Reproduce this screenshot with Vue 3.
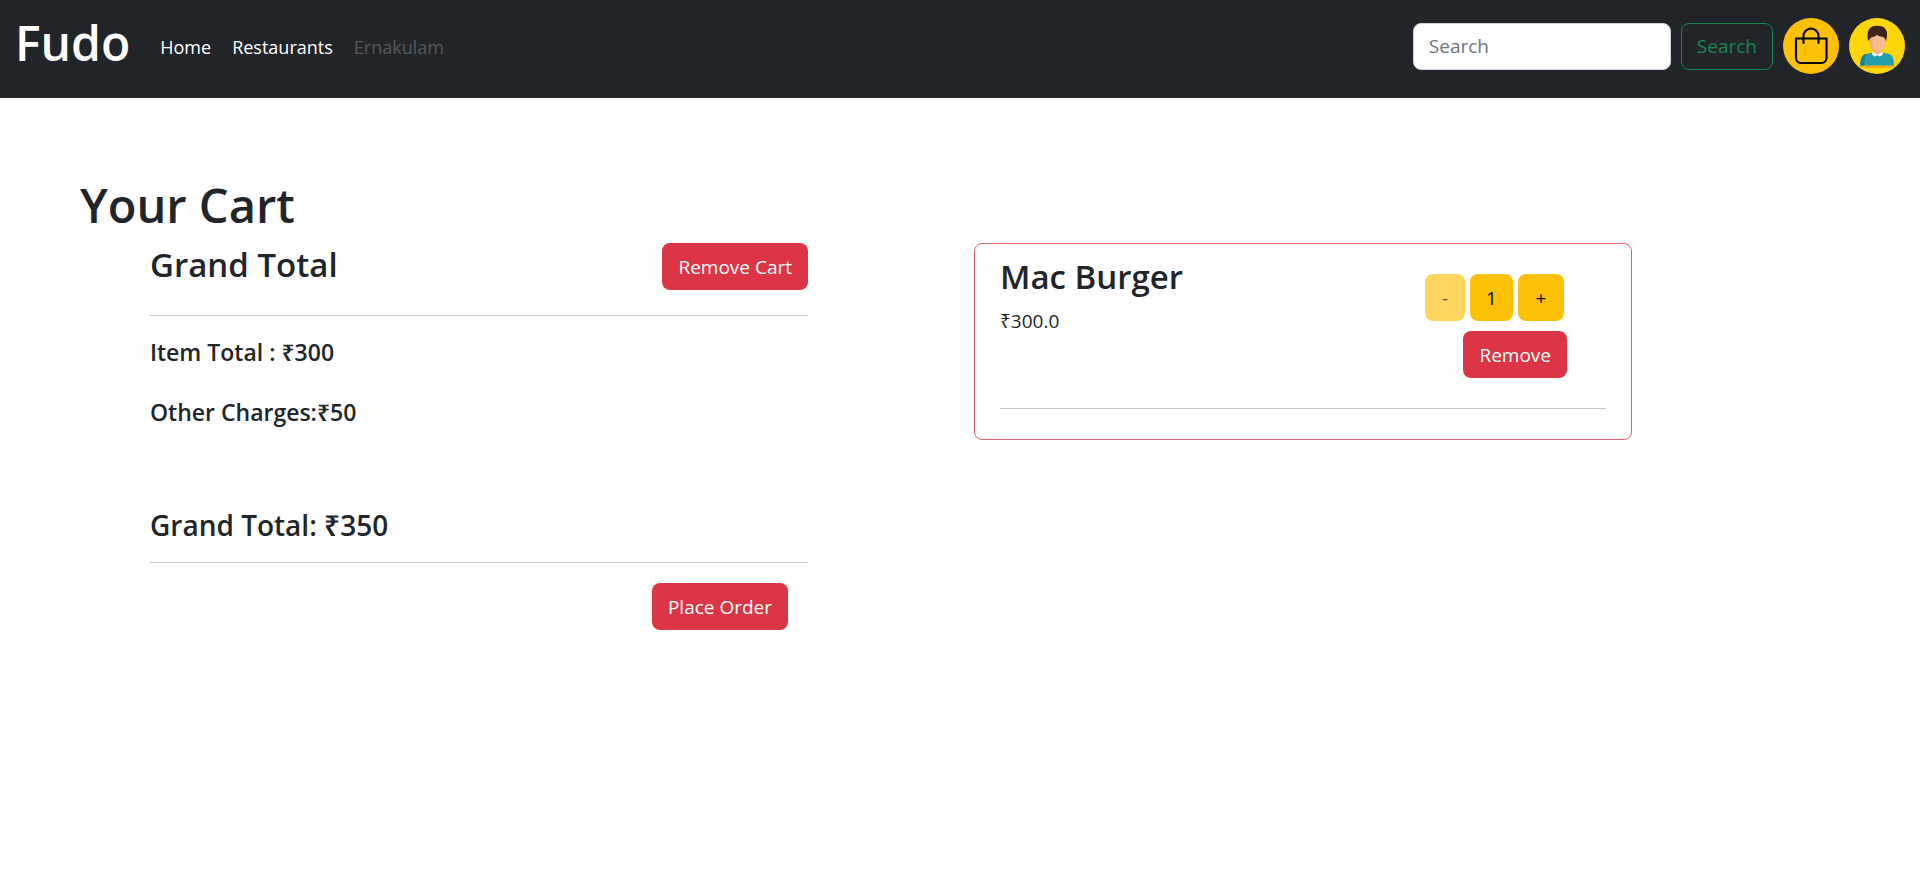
<script setup>
import { computed, ref } from 'vue'

const query = ref('')
const quantity = ref(1)
const price = 300
const otherCharges = 50
const itemTotal = computed(() => price * quantity.value)
const grandTotal = computed(() => itemTotal.value + otherCharges)
</script>

<template>
  <header class="navbar">
    <a class="brand" href="#">Fudo</a>
    <nav class="links" aria-label="Main">
      <a href="#">Home</a>
      <a href="#">Restaurants</a>
      <a href="#" class="muted" aria-disabled="true">Ernakulam</a>
    </nav>
    <form class="search" role="search" @submit.prevent>
      <input v-model="query" type="search" placeholder="Search" aria-label="Search" />
      <button type="submit" class="btn outline">Search</button>
    </form>
    <a class="circle" href="#" aria-label="Cart">
      <svg viewBox="0 0 56 56" aria-hidden="true">
        <circle cx="28" cy="28" r="28" fill="#ffc107" />
        <g fill="none" stroke="#000" stroke-width="2.2" stroke-linecap="round">
          <path d="M13 20.500h30.500v19.500a5 5 0 0 1-5 5H18a5 5 0 0 1-5-5z" />
          <path d="M20.500 25v-7a7.500 7.500 0 0 1 15 0v7" />
        </g>
      </svg>
    </a>
    <a class="circle" href="#" aria-label="Profile">
      <svg viewBox="0 0 56 56" aria-hidden="true">
        <circle cx="28" cy="28" r="28" fill="#fed60a" />
        <path d="M11 47.500h34v1.500q-17 2-34 0z" fill="#f9a70d" />
        <path d="M11 47.500c1-7 1.500-10.500 6-11.500l7-1.500h9l7 1.500c4 1 4.500 4.500 5 11.500z" fill="#249ead" />
        <path d="M11 47.500c1-7 1.500-10.500 6-11.500l1-.2c-2 2-2.500 6-3 11.700z" fill="#158391" />
        <path d="M24 29h9v6l-4.500 3-4.500-3z" fill="#e39b70" />
        <path d="M20 15h17v8c0 6-5 11.500-8.500 11.500S20 29 20 23z" fill="#f7bd91" />
        <path d="M20 17v6c0 6 5 11.500 8.500 11.500-5-4-5.500-9-5-15z" fill="#f0ab80" />
        <path d="M19 23c-1.500-9 .5-14 6.500-15 8-1 13.500 2 12.500 10l-1 5.500c-.5-3-2-4.500-5-5-2 0-3-1-4-2-1.500 2.500-4 2-6 3-1 .8-1.500 2-3 3.500z" fill="#3d2319" />
        <path d="M24 33.500l4.500 3 4.500-3 1 3-3 2-2.500-1.500-2.500 1.500-3-2z" fill="#fff" />
      </svg>
    </a>
  </header>

  <main>
    <h1>Your Cart</h1>
    <div class="columns">
      <section class="summary">
        <div class="summary-head">
          <h2>Grand Total</h2>
          <button type="button" class="btn danger">Remove Cart</button>
        </div>
        <hr />
        <h4>Item Total : ₹{{ itemTotal }}</h4>
        <h4>Other Charges:₹{{ otherCharges }}</h4>
        <h3>Grand Total: ₹{{ grandTotal }}</h3>
        <hr />
        <div class="place">
          <button type="button" class="btn danger">Place Order</button>
        </div>
      </section>

      <article class="item">
        <div class="item-row">
          <div>
            <h2>Mac Burger</h2>
            <p>₹{{ price }}.0</p>
          </div>
          <div class="controls">
            <div class="stepper">
              <button type="button" class="btn amber" :disabled="quantity === 1" aria-label="Decrease quantity" @click="quantity--">-</button>
              <button type="button" class="btn amber">{{ quantity }}</button>
              <button type="button" class="btn amber" aria-label="Increase quantity" @click="quantity++">+</button>
            </div>
            <button type="button" class="btn danger">Remove</button>
          </div>
        </div>
        <hr />
      </article>
    </div>
  </main>
</template>

<style>
body {
  margin: 0;
  background: #fff;
  color: #212529;
  font-family: "Open Sans", "Noto Sans", sans-serif;
  font-size: 19px;
  line-height: 30px;
}
</style>

<style scoped>
* {
  box-sizing: border-box;
}
h1, h2, h3, h4, p {
  margin: 0;
}
h1, h2, h3, h4 {
  font-weight: 600;
}
h1 {
  padding-left: 80px;
  font-size: 47px;
  line-height: 60px;
}
h2 {
  font-size: 33px;
  line-height: 40px;
}
h3 {
  font-size: 28px;
  line-height: 36px;
}
h4 {
  font-size: 23px;
  line-height: 30px;
}
hr {
  margin: 0;
  border: 0;
  border-top: 1px solid #c7c8c9;
}
a {
  color: #fff;
  text-decoration: none;
}
.navbar {
  display: flex;
  align-items: center;
  gap: 10px;
  padding: 18px 15px 24px;
  background: #212529;
}
.brand {
  padding-bottom: 6px;
  font-size: 48px;
  font-weight: 600;
  line-height: 50px;
}
.links {
  display: flex;
  gap: 21px;
  margin-left: 20px;
  padding-top: 2px;
  font-size: 18px;
}
.links .muted {
  color: #55585b;
}
.search {
  display: flex;
  gap: 10px;
  margin-left: auto;
}
.search input {
  width: 258px;
  height: 47px;
  padding: 0 15px;
  border: 1px solid #ced4da;
  border-radius: 8px;
  background: #fff;
  color: #212529;
  font: inherit;
  appearance: none;
}
.search input::placeholder {
  color: #6c757d;
  opacity: 1;
}
.circle,
.circle svg {
  display: block;
  width: 56px;
  height: 56px;
}
.btn {
  height: 47px;
  padding: 0 15px;
  border: 1px solid transparent;
  border-radius: 8px;
  font: inherit;
  cursor: pointer;
}
.outline {
  border-color: #198754;
  background: transparent;
  color: #198754;
}
.danger {
  background: #dc3545;
  color: #fff;
}
.amber {
  min-width: 43px;
  background: #ffc107;
  color: #000;
}
.amber:first-child {
  min-width: 40px;
}
.amber:last-child {
  min-width: 46px;
}
.amber:disabled {
  opacity: 0.65;
}
main {
  padding-top: 77px;
}
.columns {
  display: grid;
  grid-template-columns: 1fr 1fr;
  align-items: start;
  gap: 166px;
  margin: 8px 15% 0 150px;
}
.summary-head {
  display: flex;
  align-items: flex-start;
  justify-content: space-between;
  padding-bottom: 25px;
}
.summary-head h2 {
  line-height: 44px;
}
.summary h4 {
  margin-top: 21px;
  margin-bottom: 30px;
}
.summary h4 + h4 {
  margin-top: 0;
}
.summary h3 {
  margin-top: 80px;
  margin-bottom: 19px;
}
.place {
  display: flex;
  justify-content: flex-end;
  padding: 20px 20px 0 0;
}
.item {
  padding: 14px 25px 30px;
  border: 1px solid #e4606d;
  border-radius: 8px;
}
.item-row {
  display: flex;
  justify-content: space-between;
  padding-bottom: 30px;
}
.item h2 {
  line-height: 38px;
}
.item p {
  margin-top: 10px;
}
.controls {
  display: flex;
  flex-direction: column;
  align-items: flex-end;
  gap: 10px;
  padding: 16px 39px 0 0;
}
.stepper {
  display: flex;
  gap: 5px;
  padding-right: 3px;
}
</style>
